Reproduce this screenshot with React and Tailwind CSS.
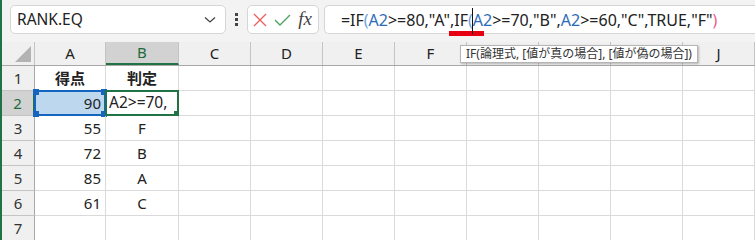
import React from "react";

const cols = [
  { l: "A", w: "w-[71px]" },
  { l: "B", w: "w-[73px]" },
  { l: "C", w: "w-[72px]" },
  { l: "D", w: "w-[72px]" },
  { l: "E", w: "w-[72px]" },
  { l: "F", w: "w-[72px]" },
  { l: "G", w: "w-[72px]", hidden: true },
  { l: "H", w: "w-[72px]", hidden: true },
  { l: "I", w: "w-[72px]", hidden: true },
  { l: "J", w: "w-[72px]" },
];

const rows = [
  { n: 1, a: "得点", b: "判定", head: true },
  { n: 2, a: "90", b: "" },
  { n: 3, a: "55", b: "F" },
  { n: 4, a: "72", b: "B" },
  { n: 5, a: "85", b: "A" },
  { n: 6, a: "61", b: "C" },
  { n: 7, a: "", b: "" },
];

function Formula() {
  const blue = "text-[#2b6cb8]";
  return (
    <span className="text-[16px] text-[#222] whitespace-nowrap">
      =IF<span className="text-[#6ea3dc]">(</span>
      <span className={blue}>A2</span>&gt;=80,"A",
      <span className="relative">
        IF<span className="text-[#6ea3dc]">(</span>
        {/* red underline under IF */}
        <span className="absolute -left-[5px] top-[22px] w-[35px] h-[5px] bg-[#e60012]" />
        {/* text cursor */}
        <span className="absolute right-0 -top-[1px] w-px h-[26px] bg-[#111]" />
      </span>
      <span className={blue}>A2</span>&gt;=70,"B",
      <span className={blue}>A2</span>&gt;=60,"C",TRUE,"F"
      <span className="text-[#e8608c]">)</span>
    </span>
  );
}

function Handle({ pos }) {
  return <div className={`absolute w-[6px] h-[6px] bg-[#1565c0] ${pos}`} />;
}

export default function App() {
  return (
    <div
      className="relative w-[755px] h-[240px] overflow-hidden bg-white border-l-2 border-[#217346]"
      style={{ fontFamily: '"Noto Sans", "Noto Sans CJK JP", sans-serif' }}
    >
      {/* formula bar */}
      <div className="h-[42px] bg-[#f3f3f3] flex items-start pt-[5px] pl-[8px]">
        <div className="w-[220px] h-[29px] bg-white border border-[#d6d6d6] rounded-[5px] flex items-center justify-between pl-[6px] pr-[9px]">
          <span className="text-[15.5px] text-[#222]">RANK.EQ</span>
          <svg width="12" height="8" viewBox="0 0 12 8">
            <path d="M1 1.5 L6 6 L11 1.5" fill="none" stroke="#444" strokeWidth="1.3" />
          </svg>
        </div>
        <div className="w-[22px] h-[29px] flex flex-col items-center justify-center gap-[2px]">
          <div className="w-[3px] h-[3px] bg-[#444]" />
          <div className="w-[3px] h-[3px] bg-[#444]" />
          <div className="w-[3px] h-[3px] bg-[#444]" />
        </div>
        <div className="w-[73px] h-[29px] bg-white border border-[#d6d6d6] rounded-[5px] flex items-center pl-[5px] gap-[7px]">
          <svg width="14" height="14" viewBox="0 0 14 14">
            <path d="M1 1 L13 13 M13 1 L1 13" stroke="#e8635e" strokeWidth="1.4" />
          </svg>
          <svg width="17" height="14" viewBox="0 0 17 14">
            <path d="M1 7 L6 12 L16 2" fill="none" stroke="#4fa463" strokeWidth="1.4" />
          </svg>
          <span
            className="text-[19px] italic text-[#444] leading-none -mt-[2px]"
            style={{ fontFamily: '"Liberation Serif", serif' }}
          >
            fx
          </span>
        </div>
        <div className="ml-[5px] w-[440px] h-[29px] bg-white border border-r-0 border-[#d6d6d6] rounded-l-[5px] flex items-center pl-[16px]">
          <Formula />
        </div>
      </div>

      {/* column headers */}
      <div className="flex h-[24px] bg-[#f0f0f0] border-b border-[#a8a8a8]">
        <div className="w-[33px] shrink-0 border-r border-[#c4c4c4] relative">
          <div
            className="absolute left-[13px] top-[4px] w-[16px] h-[16px] bg-[#b3b3b3]"
            style={{ clipPath: "polygon(100% 0, 100% 100%, 0 100%)" }}
          />
        </div>
        {cols.map((c) => (
          <div
            key={c.l}
            className={`${c.w} shrink-0 flex items-center justify-center text-[15px] border-r ${
              c.l === "B"
                ? "bg-[#d2d2d2] text-[#1d6b40] border-b-2 border-b-[#217346] border-r-[#c4c4c4]"
                : "text-[#222] border-[#c4c4c4]"
            }`}
          >
            {c.hidden ? null : c.l}
          </div>
        ))}
      </div>

      {/* rows */}
      {rows.map((r) => (
        <div key={r.n} className="flex h-[25px]">
          <div
            className={`w-[33px] shrink-0 flex items-center justify-center text-[15px] border-b ${
              r.n === 2
                ? "bg-[#d2d2d2] text-[#1d6b40] border-r-2 border-r-[#217346] border-b-[#c4c4c4]"
                : "bg-[#f0f0f0] text-[#333] border-r border-r-[#a8a8a8] border-b-[#c4c4c4]"
            }`}
          >
            {r.n}
          </div>
          {cols.map((c) => {
            const isA = c.l === "A";
            const isB = c.l === "B";
            let content = null;
            let cls = "";
            if (isA && r.a) {
              content = r.a;
              cls = r.head ? "justify-center font-bold" : "justify-end pr-[4px]";
            }
            if (isB && r.b) {
              content = r.b;
              cls = r.head ? "justify-center font-bold" : "justify-center";
            }
            const selA = isA && r.n === 2;
            const selB = isB && r.n === 2;
            return (
              <div
                key={c.l}
                className={`${c.w} shrink-0 relative flex items-center text-[15px] text-[#222] border-r border-b border-[#dadada] ${cls} ${
                  selA ? "bg-[#bcd7ee]" : ""
                }`}
              >
                {content}
                {selA && (
                  <div className="absolute -left-[1px] -top-[1px] -right-[1px] -bottom-[1px] border-2 border-[#1565c0]">
                    <Handle pos="-left-[3px] -top-[3px]" />
                    <Handle pos="-right-[3px] -top-[3px]" />
                    <Handle pos="-left-[3px] -bottom-[3px]" />
                    <Handle pos="-right-[3px] -bottom-[3px]" />
                  </div>
                )}
                {selB && (
                  <div className="absolute -left-[1px] -top-[1px] -right-[1px] -bottom-[1px] border-2 border-[#217346] flex items-center pl-[2px] overflow-hidden">
                    <span className="whitespace-nowrap text-[15.5px] text-[#222]">A2&gt;=70,</span>
                    <div className="absolute -right-[3px] -bottom-[3px] w-[6px] h-[6px] bg-[#217346]" />
                  </div>
                )}
              </div>
            );
          })}
        </div>
      ))}

      {/* function tooltip */}
      <div className="absolute left-[458px] top-[45px] h-[18px] px-[5px] bg-white border border-[#b5b5b5] shadow-[1px_1px_2px_rgba(0,0,0,0.25)] flex items-center">
        <span className="text-[12px] text-[#333] whitespace-nowrap leading-none">
          IF(論理式, [値が真の場合], [値が偽の場合])
        </span>
      </div>
    </div>
  );
}
